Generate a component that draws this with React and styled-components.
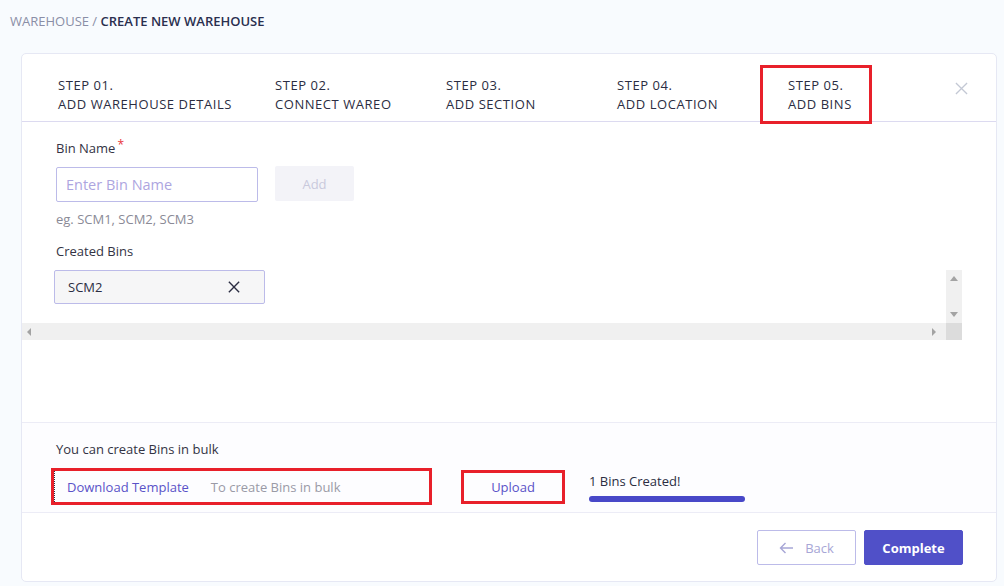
import React from "react";
import styled, { createGlobalStyle } from "styled-components";

const GlobalStyle = createGlobalStyle`
  html, body {
    margin: 0;
    padding: 0;
    background: #f8fbfe;
    font-family: "Open Sans", "Noto Sans", sans-serif;
    color: #2b2d42;
  }
  * { box-sizing: border-box; }
`;

const Page = styled.div`
  width: 1004px;
  height: 586px;
  padding: 12px 7px 4px 10px;
  overflow: hidden;
`;

const Breadcrumb = styled.div`
  font-size: 13px;
  line-height: 19px;
  color: #8a8ea6;
  margin-bottom: 22px;
  b {
    color: #2a2f4f;
    font-weight: 600;
  }
`;

const Card = styled.div`
  margin-left: 11px;
  width: 976px;
  height: 529px;
  background: #fff;
  border: 1px solid #e6e8f4;
  border-radius: 5px;
  display: flex;
  flex-direction: column;
`;

const Stepper = styled.div`
  display: grid;
  grid-template-columns: 217px 171px 171px 171px 1fr auto;
  align-items: start;
  padding: 22px 28px 0 36px;
  height: 68px;
  border-bottom: 1px solid #dcdaf0;
`;

const Step = styled.div`
  position: relative;
  font-size: 13px;
  line-height: 19px;
  letter-spacing: 0.55px;
  color: #2b2d42;
  text-transform: uppercase;
  white-space: nowrap;
`;

const Highlight = styled.div`
  position: absolute;
  left: -28px;
  top: -11px;
  width: 112px;
  height: 59px;
  border: 3px solid #e8202a;
`;

const Close = styled.button`
  border: none;
  background: none;
  padding: 0;
  margin-top: 6px;
  display: flex;
`;

const Body = styled.div`
  padding: 17px 0 0 34px;
  height: 301px;
  border-bottom: 1px solid #ececf6;
`;

const Label = styled.div`
  font-size: 13px;
  line-height: 18px;
  color: #333344;
  padding-left: ${({ indent }) => indent || 0}px;
  sup {
    color: #e8343a;
    font-size: 12px;
    margin-left: 2px;
    vertical-align: 4px;
    line-height: 0;
  }
`;

const InputRow = styled.div`
  display: flex;
  align-items: flex-start;
  gap: 17px;
  margin-top: 10px;
`;

const Input = styled.input`
  width: 202px;
  height: 35px;
  border: 1px solid #bcbbe9;
  border-radius: 2px;
  padding: 0 9px;
  font-family: inherit;
  font-size: 14.5px;
  outline: none;
  &::placeholder { color: #ada5df; }
`;

const AddButton = styled.button`
  width: 79px;
  height: 35px;
  border: none;
  border-radius: 2px;
  background: #f3f3f8;
  color: #c9c9dc;
  font-family: inherit;
  font-size: 13px;
  margin-top: -1px;
`;

const Hint = styled.div`
  font-size: 13px;
  line-height: 18px;
  color: #8a8a96;
  margin-top: 8px;
  margin-bottom: 14px;
`;

const ScrollBox = styled.div`
  margin: 10px 34px 0 -34px;
  display: grid;
  grid-template-columns: 1fr 16px;
  grid-template-rows: 53px 17px;
`;

const ScrollContent = styled.div`
  padding-left: 32px;
`;

const Chip = styled.div`
  width: 211px;
  height: 34px;
  background: #f6f6f7;
  border: 1px solid #bcbbe9;
  border-radius: 2px;
  display: flex;
  align-items: center;
  justify-content: space-between;
  padding: 0 24px 0 13px;
  font-size: 13px;
  color: #2b2d42;
`;

const Track = styled.div`
  background: #f0f0f0;
  display: flex;
  flex-direction: ${({ vertical }) => (vertical ? "column" : "row")};
  justify-content: space-between;
  align-items: center;
  padding: ${({ vertical }) => (vertical ? "6px 0 6px" : "0 10px 0 5px")};
`;

const Corner = styled.div`
  background: #dcdcdc;
`;

const Arrow = styled.span`
  width: 0;
  height: 0;
  border: 4px solid transparent;
  ${({ dir }) =>
    dir === "up"
      ? "border-bottom: 5px solid #a3a3a3; border-top: 0;"
      : dir === "down"
      ? "border-top: 5px solid #a3a3a3; border-bottom: 0;"
      : dir === "left"
      ? "border-right: 4px solid #a3a3a3; border-left: 0; border-width: 4px 4px 4px 0;"
      : "border-left: 4px solid #a3a3a3; border-right: 0; border-width: 4px 0 4px 4px;"}
`;

const Bulk = styled.div`
  padding: 17px 0 0 29px;
  height: 90px;
  border-bottom: 1px solid #ececf6;
  background: #fdfdff;
`;

const BulkRow = styled.div`
  display: flex;
  align-items: flex-start;
  margin-top: 10px;
`;

const TemplateBox = styled.div`
  width: 381px;
  height: 37px;
  border: 3px solid #e8202a;
  display: flex;
  align-items: center;
`;

const TemplateLink = styled.a`
  display: flex;
  align-items: center;
  height: 31px;
  border-left: 1px dotted #2b2d42;
  padding-left: 12px;
  font-size: 13px;
  color: #5a52c8;
  text-decoration: none;
`;

const Muted = styled.span`
  margin-left: 22px;
  font-size: 13px;
  color: #9a9aa6;
`;

const UploadBox = styled.div`
  margin: 2px 0 0 29px;
  width: 104px;
  height: 34px;
  border: 3px solid #e8202a;
  display: flex;
  align-items: center;
  justify-content: center;
  font-size: 13px;
  color: #5a52c8;
`;

const Progress = styled.div`
  margin: 4px 0 0 24px;
  font-size: 13px;
  line-height: 18px;
  color: #2b2d42;
`;

const Bar = styled.div`
  margin-top: 6px;
  width: 156px;
  height: 6px;
  border-radius: 3px;
  background: #4848c8;
`;

const Footer = styled.div`
  flex: 1;
  display: flex;
  justify-content: flex-end;
  align-items: flex-start;
  gap: 8px;
  padding: 17px 33px 0 0;
`;

const Button = styled.button`
  width: 99px;
  height: 35px;
  border-radius: 2px;
  font-family: inherit;
  font-size: 13px;
  display: flex;
  align-items: center;
  justify-content: center;
  gap: 11px;
  border: 1px solid ${({ primary }) => (primary ? "#5050c8" : "#bcbbe9")};
  background: ${({ primary }) => (primary ? "#5050c8" : "#fff")};
  color: ${({ primary }) => (primary ? "#fff" : "#a7a6d6")};
  font-weight: ${({ primary }) => (primary ? 700 : 400)};
`;

const steps = [
  ["Step 01.", "Add Warehouse Details"],
  ["Step 02.", "Connect Wareo"],
  ["Step 03.", "Add Section"],
  ["Step 04.", "Add Location"],
  ["Step 05.", "Add Bins"],
];

const XIcon = ({ size, color, width }) => (
  <svg width={size} height={size} viewBox="0 0 14 14">
    <path d="M1 1 L13 13 M13 1 L1 13" stroke={color} strokeWidth={width} fill="none" />
  </svg>
);

export default function App() {
  return (
    <Page>
      <GlobalStyle />
      <Breadcrumb>
        WAREHOUSE / <b>CREATE NEW WAREHOUSE</b>
      </Breadcrumb>
      <Card>
        <Stepper>
          {steps.map(([n, t], i) => (
            <Step key={n}>
              {i === 4 && <Highlight />}
              <div>{n}</div>
              <div>{t}</div>
            </Step>
          ))}
          <Close>
            <XIcon size={13} color="#c3c8d4" width={1.4} />
          </Close>
        </Stepper>

        <Body>
          <Label>
            Bin Name<sup>*</sup>
          </Label>
          <InputRow>
            <Input placeholder="Enter Bin Name" />
            <AddButton>Add</AddButton>
          </InputRow>
          <Hint>eg. SCM1, SCM2, SCM3</Hint>
          <Label>Created Bins</Label>
          <ScrollBox>
            <ScrollContent>
              <Chip>
                SCM2
                <XIcon size={12} color="#2b2d42" width={1.6} />
              </Chip>
            </ScrollContent>
            <Track vertical>
              <Arrow dir="up" />
              <Arrow dir="down" />
            </Track>
            <Track>
              <Arrow dir="left" />
              <Arrow dir="right" />
            </Track>
            <Corner />
          </ScrollBox>
        </Body>

        <Bulk>
          <Label indent={5}>You can create Bins in bulk</Label>
          <BulkRow>
            <TemplateBox>
              <TemplateLink href="#">Download Template</TemplateLink>
              <Muted>To create Bins in bulk</Muted>
            </TemplateBox>
            <UploadBox>Upload</UploadBox>
            <Progress>
              1 Bins Created!
              <Bar />
            </Progress>
          </BulkRow>
        </Bulk>

        <Footer>
          <Button>
            <svg width="15" height="12" viewBox="0 0 15 12">
              <path d="M14 6 H1.5 M6.5 1 L1.5 6 L6.5 11" stroke="#a7a6d6" strokeWidth="1.4" fill="none" />
            </svg>
            Back
          </Button>
          <Button primary>Complete</Button>
        </Footer>
      </Card>
    </Page>
  );
}
